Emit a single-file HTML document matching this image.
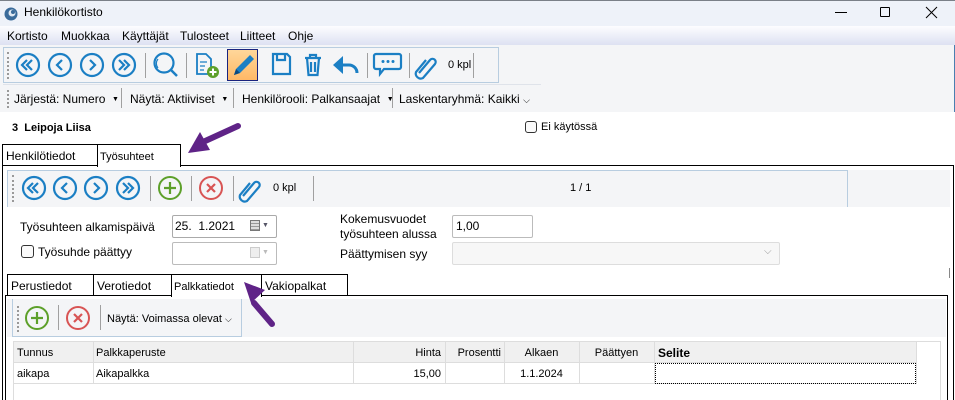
<!DOCTYPE html>
<html><head><meta charset="utf-8"><style>
*{box-sizing:border-box;margin:0;padding:0}
html,body{width:955px;height:400px;overflow:hidden}
body{background:#fff;font-family:"Liberation Sans",sans-serif;font-size:12px;color:#000;position:relative}
.a{position:absolute;white-space:nowrap}
.sep{position:absolute;width:1px;background:#a0a0a0}
svg{position:absolute;overflow:visible}
.dd{font-size:7px;vertical-align:2px}
</style></head><body>
<!-- title bar -->
<div class="a" style="left:0;top:0;width:955px;height:26px;background:#eef2f9;border-top:1px solid #7a8088"></div>
<svg style="left:3px;top:6px" width="16" height="16"><circle cx="8" cy="8" r="6.5" fill="#3a6b9a"/><circle cx="9" cy="7" r="3.5" fill="#dfe8f2"/><circle cx="10" cy="6" r="2" fill="#3a6b9a"/></svg>
<div class="a" style="left:24px;top:5px;font-size:12px">Henkilökortisto</div>
<div class="a" style="left:835px;top:12px;width:12px;height:1px;background:#000"></div>
<div class="a" style="left:880px;top:7px;width:10px;height:10px;border:1px solid #000;border-radius:1px"></div>
<svg style="left:926px;top:7px" width="11" height="11"><path d="M0 0L11 11M11 0L0 11" stroke="#000" stroke-width="1"/></svg>
<!-- menu -->
<div class="a" style="left:0;top:26px;width:955px;height:19px;background:linear-gradient(#fdfdff,#dde1f2)"></div>
<div class="a" style="left:7px;top:29px">Kortisto</div>
<div class="a" style="left:61px;top:29px">Muokkaa</div>
<div class="a" style="left:122px;top:29px">Käyttäjät</div>
<div class="a" style="left:180px;top:29px">Tulosteet</div>
<div class="a" style="left:240px;top:29px">Liitteet</div>
<div class="a" style="left:288px;top:29px">Ohje</div>
<!-- toolbar area -->
<div class="a" style="left:0;top:45px;width:955px;height:67px;background:#f4f5f7"></div>
<div class="a" style="left:954px;top:45px;width:1px;height:67px;background:#4a7fb0"></div>
<div class="a" style="left:3px;top:47px;width:496px;height:36px;border:1px solid #b8cde0"></div>
<div class="a" style="left:7px;top:52px;height:27px;border-left:2px dotted #999"></div>
<svg style="left:0;top:45px" width="500" height="40">
<g fill="none" stroke="#1b7fc4" stroke-width="2.2">
<circle cx="28" cy="20" r="11"/><path d="M27 15l-5 5 5 5M32 15l-5 5 5 5"/>
<circle cx="60" cy="20" r="11"/><path d="M62 15l-5 5 5 5"/>
<circle cx="92" cy="20" r="11"/><path d="M90 15l5 5-5 5"/>
<circle cx="124" cy="20" r="11"/><path d="M119 15l5 5-5 5M124 15l5 5-5 5"/>
<circle cx="164" cy="18" r="9.5"/><path d="M171 25l6 6" stroke-width="2.5"/><path d="M158 14a7 7 0 0 0 0 9" stroke-width="1.2"/>
<path d="M197 9h9l5 5v15h-14z" stroke-width="1.8"/><path d="M200 17h7M200 21h5M200 25h4" stroke-width="1.3"/>
<path d="M273 9h14l3 3v17h-17z"/><path d="M277 9v6h8v-6"/>
<path d="M305 13h16M310 13v-3h6v3M307 13l1.5 17h9l1.5-17M311 17v10M315 17v10"/>
<path d="M343 20h6a8 8 0 0 1 8 8" stroke-width="3"/>
<path d="M376 9h23a2 2 0 0 1 2 2v11a2 2 0 0 1-2 2h-15l-4 5v-5h-4a2 2 0 0 1-2-2v-11a2 2 0 0 1 2-2z"/>
<path d="M419 28l11-13a3 3 0 0 1 5 4l-12 14a5 5 0 0 1-7-6l10-12" stroke-width="2.2"/>
</g>
<path d="M333 20l10-9v18z" fill="#1b7fc4"/>
<g fill="#1b7fc4"><circle cx="383" cy="16.5" r="1.5"/><circle cx="388" cy="16.5" r="1.5"/><circle cx="393" cy="16.5" r="1.5"/></g>
<circle cx="213" cy="27" r="6" fill="#5da02a"/><path d="M213 23.5v7M209.5 27h7" stroke="#fff" stroke-width="2"/>
</svg>
<div class="sep" style="left:145px;top:53px;height:25px"></div>
<div class="sep" style="left:186px;top:53px;height:25px"></div>
<div class="sep" style="left:229px;top:53px;height:25px"></div>
<div class="sep" style="left:367px;top:53px;height:25px"></div>
<div class="sep" style="left:409px;top:53px;height:25px"></div>
<div class="sep" style="left:473px;top:53px;height:25px"></div>
<div class="a" style="left:227px;top:49px;width:31px;height:32px;background:linear-gradient(#ffd79a,#ffb866);border:1px solid #1a237e"></div>
<svg style="left:227px;top:49px" width="31" height="32"><path d="M7 26l2-6 14-14 4 4-14 14z" fill="#1b7fc4"/><path d="M7 26l2-6 4 4z" fill="#0d4a80"/></svg>
<div class="a" style="left:448px;top:59px;font-size:11px">0 kpl</div>
<!-- toolbar 2 -->
<div class="a" style="left:3px;top:84px;width:538px;height:28px;border-top:1px solid #dfe3ea"></div>
<div class="a" style="left:7px;top:90px;height:18px;border-left:2px dotted #999"></div>
<div class="a" style="left:14px;top:92px">Järjestä: Numero&nbsp; <span class="dd">▼</span></div>
<div class="sep" style="left:121px;top:88px;height:20px"></div>
<div class="a" style="left:130px;top:92px">Näytä: Aktiiviset&nbsp; <span class="dd">▼</span></div>
<div class="sep" style="left:233px;top:88px;height:20px"></div>
<div class="a" style="left:242px;top:92px">Henkilörooli: Palkansaajat&nbsp; <span class="dd">▼</span></div>
<div class="sep" style="left:392px;top:88px;height:20px"></div>
<div class="a" style="left:399px;top:92px">Laskentaryhmä: Kaikki <span style="font-size:9px">⌵</span></div>
<!-- header -->
<div class="a" style="left:12px;top:122px;font-weight:bold;font-size:11px">3&nbsp; Leipoja Liisa</div>
<div class="a" style="left:525px;top:121px;width:12px;height:12px;border:1px solid #333;border-radius:3px;background:#fafafa"></div>
<div class="a" style="left:541px;top:121px;font-size:11px">Ei käytössä</div>
<!-- tabs -->
<div class="a" style="left:2px;top:144px;width:96px;height:22px;border:1px solid #000;border-bottom:none"></div>
<div class="a" style="left:6px;top:149px">Henkilötiedot</div>
<div class="a" style="left:97px;top:144px;width:84px;height:23px;border:1px solid #000;border-bottom:none;background:#fff;z-index:2"></div>
<div class="a" style="left:100px;top:151px;font-size:11px;z-index:3">Työsuhteet</div>
<div class="a" style="left:2px;top:165px;width:952px;height:240px;border:1px solid #000"></div>
<!-- inner toolbar -->
<div class="a" style="left:7px;top:170px;width:943px;height:37px;background:#f4f5f7"></div>
<div class="a" style="left:7px;top:170px;width:841px;height:37px;border:1px solid #b8cde0;border-bottom:none"></div>
<div class="a" style="left:12px;top:175px;height:27px;border-left:2px dotted #999"></div>
<svg style="left:0;top:168px" width="330" height="40">
<g fill="none" stroke="#1b7fc4" stroke-width="2.2">
<circle cx="34" cy="20" r="11"/><path d="M33 15l-5 5 5 5M38 15l-5 5 5 5"/>
<circle cx="65" cy="20" r="11"/><path d="M67 15l-5 5 5 5"/>
<circle cx="96" cy="20" r="11"/><path d="M94 15l5 5-5 5"/>
<circle cx="128" cy="20" r="11"/><path d="M123 15l5 5-5 5M128 15l5 5-5 5"/>
<path d="M243 28l11-13a3 3 0 0 1 5 4l-12 14a5 5 0 0 1-7-6l10-12" stroke-width="2.2"/>
</g>
<circle cx="170" cy="20" r="11" fill="none" stroke="#5da02a" stroke-width="2"/><path d="M170 14v12M164 20h12" stroke="#5da02a" stroke-width="2.2"/>
<circle cx="211" cy="20" r="11" fill="none" stroke="#d85454" stroke-width="2"/><path d="M207 16l8 8M215 16l-8 8" stroke="#d85454" stroke-width="2.2"/>
</svg>
<div class="sep" style="left:150px;top:176px;height:25px"></div>
<div class="sep" style="left:191px;top:176px;height:25px"></div>
<div class="sep" style="left:233px;top:176px;height:25px"></div>
<div class="sep" style="left:313px;top:176px;height:25px"></div>
<div class="a" style="left:273px;top:182px;font-size:11px">0 kpl</div>
<div class="a" style="left:570px;top:182px;font-size:11px">1 / 1</div>
<!-- form -->
<div class="a" style="left:20px;top:220px">Työsuhteen alkamispäivä</div>
<div class="a" style="left:172px;top:215px;width:105px;height:23px;border:1px solid #aaa;border-radius:2px"></div>
<div class="a" style="left:175px;top:219px">25.&nbsp; 1.2021</div>
<div class="a" style="left:250px;top:220px;width:10px;height:11px;border:1px solid #777;background:repeating-linear-gradient(#ddd 0 2px,#999 2px 3px)"></div>
<div class="a" style="left:262px;top:222px;font-size:7px;color:#556">▼</div>
<div class="a" style="left:21px;top:245px;width:13px;height:13px;border:1px solid #333;border-radius:3px;background:#fafafa"></div>
<div class="a" style="left:38px;top:245px">Työsuhde päättyy</div>
<div class="a" style="left:172px;top:242px;width:105px;height:23px;border:1px solid #bbb;border-radius:2px"></div>
<div class="a" style="left:250px;top:247px;width:10px;height:11px;border:1px solid #ccc;background:#eee"></div>
<div class="a" style="left:262px;top:249px;font-size:7px;color:#bbb">▼</div>
<div class="a" style="left:340px;top:212px;line-height:15px">Kokemusvuodet<br>työsuhteen alussa</div>
<div class="a" style="left:452px;top:215px;width:81px;height:23px;border:1px solid #bbb;border-radius:2px"></div>
<div class="a" style="left:456px;top:219px">1,00</div>
<div class="a" style="left:340px;top:247px">Päättymisen syy</div>
<div class="a" style="left:452px;top:242px;width:328px;height:23px;border:1px solid #ddd;background:#f7f7f7;border-radius:2px"></div>
<div class="a" style="left:764px;top:246px;font-size:10px;color:#999">⌵</div>
<div class="a" style="left:949px;top:268px;width:1px;height:10px;background:#888"></div>
<!-- subtabs -->
<div class="a" style="left:7px;top:274px;width:87px;height:22px;border:1px solid #000;border-bottom:none"></div>
<div class="a" style="left:11px;top:279px">Perustiedot</div>
<div class="a" style="left:93px;top:274px;width:79px;height:22px;border:1px solid #000;border-bottom:none"></div>
<div class="a" style="left:97px;top:279px">Verotiedot</div>
<div class="a" style="left:171px;top:274px;width:91px;height:23px;border:1px solid #000;border-bottom:none;background:#fff;z-index:2"></div>
<div class="a" style="left:174px;top:281px;font-size:11px;z-index:3">Palkkatiedot</div>
<div class="a" style="left:261px;top:274px;width:87px;height:22px;border:1px solid #000;border-bottom:none"></div>
<div class="a" style="left:265px;top:279px">Vakiopalkat</div>
<div class="a" style="left:5px;top:295px;width:943px;height:110px;border:1px solid #000"></div>
<div class="a" style="left:7px;top:299px;width:939px;height:38px;background:#f4f5f7"></div>
<div class="a" style="left:12px;top:299px;width:230px;height:38px;border:1px solid #b8cde0;border-top:none"></div>
<div class="a" style="left:17px;top:306px;height:26px;border-left:2px dotted #999"></div>
<svg style="left:0;top:300px" width="100" height="40">
<circle cx="37" cy="18" r="11" fill="none" stroke="#5da02a" stroke-width="2"/><path d="M37 12v12M31 18h12" stroke="#5da02a" stroke-width="2.2"/>
<circle cx="78" cy="18" r="11" fill="none" stroke="#d85454" stroke-width="2"/><path d="M74 14l8 8M82 14l-8 8" stroke="#d85454" stroke-width="2.2"/>
</svg>
<div class="sep" style="left:58px;top:305px;height:25px"></div>
<div class="sep" style="left:100px;top:305px;height:25px"></div>
<div class="a" style="left:107px;top:313px;font-size:11px">Näytä: Voimassa olevat <span style="font-size:9px">⌵</span></div>
<!-- grid -->
<div class="a" style="left:13px;top:341px;width:928px;height:65px;border:1px solid #ddd"></div>
<div class="a" style="left:14px;top:342px;width:902px;height:21px;background:#f0f0f0;border-bottom:1px solid #ddd"></div>
<div class="a" style="left:14px;top:363px;width:902px;height:21px;border-bottom:1px solid #ddd"></div>
<div class="sep" style="left:93px;top:342px;height:42px;background:#ddd"></div>
<div class="sep" style="left:353px;top:342px;height:42px;background:#ddd"></div>
<div class="sep" style="left:445px;top:342px;height:42px;background:#ddd"></div>
<div class="sep" style="left:504px;top:342px;height:42px;background:#ddd"></div>
<div class="sep" style="left:579px;top:342px;height:42px;background:#ddd"></div>
<div class="sep" style="left:654px;top:342px;height:42px;background:#ddd"></div>
<div class="sep" style="left:916px;top:342px;height:42px;background:#ddd"></div>
<div class="a" style="left:17px;top:347px;font-size:11px">Tunnus</div>
<div class="a" style="left:96px;top:347px;font-size:11px">Palkkaperuste</div>
<div class="a" style="left:353px;top:347px;width:88px;text-align:right;font-size:11px">Hinta</div>
<div class="a" style="left:445px;top:347px;width:56px;text-align:right;font-size:11px">Prosentti</div>
<div class="a" style="left:504px;top:347px;width:75px;text-align:center;font-size:11px">Alkaen</div>
<div class="a" style="left:579px;top:347px;width:75px;text-align:center;font-size:11px">Päättyen</div>
<div class="a" style="left:658px;top:346px;font-size:12px;font-weight:bold">Selite</div>
<div class="a" style="left:17px;top:368px;font-size:11px">aikapa</div>
<div class="a" style="left:96px;top:368px;font-size:11px">Aikapalkka</div>
<div class="a" style="left:353px;top:368px;width:88px;text-align:right;font-size:11px">15,00</div>
<div class="a" style="left:504px;top:368px;width:75px;text-align:center;font-size:11px">1.1.2024</div>
<div class="a" style="left:655px;top:363px;width:261px;height:21px;border:1px dotted #000"></div>
<!-- purple arrows -->
<svg style="left:0;top:0;z-index:10" width="955" height="400">
<g stroke="#5f2387" stroke-width="6" stroke-linecap="round" fill="none"><path d="M238 126L203 142"/><path d="M272 324L254 303"/></g>
<path d="M188 153l12-21 10 18z" fill="#5f2387"/>
<path d="M244 282l21 8-14 13z" fill="#5f2387"/>
</svg>
</body></html>
